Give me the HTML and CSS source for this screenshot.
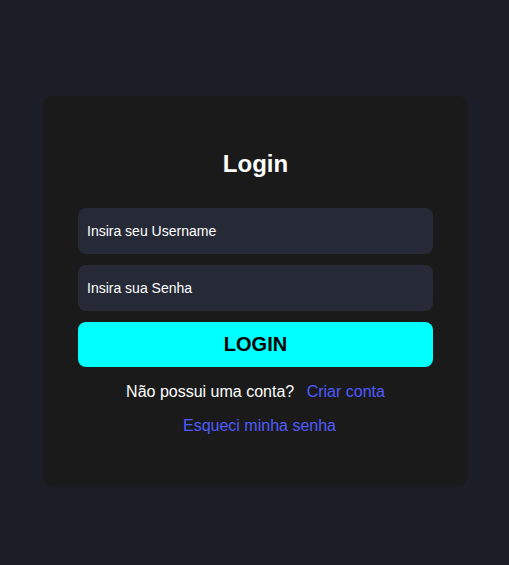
FILE: index.html
```html
<!DOCTYPE html>
<html lang="pt">
<head>
<meta charset="utf-8">
<title>Login</title>
<link rel="stylesheet" href="styles.css">
</head>
<body>
<main class="page">
  <form class="card">
    <h1 class="title">Login</h1>
    <input class="field" type="text" placeholder="Insira seu Username">
    <input class="field" type="password" placeholder="Insira sua Senha">
    <button class="btn" type="button">LOGIN</button>
    <p class="line">Não possui uma conta? <a class="link" href="#">Criar conta</a></p>
    <p class="line line-2"><a class="link" href="#">Esqueci minha senha</a></p>
  </form>
</main>
</body>
</html>
```

FILE: styles.css
```css
html, body {
  margin: 0;
  padding: 0;
  background: #1b1e27;
  font-family: "Liberation Sans", Arial, sans-serif;
}
.page {
  display: flex;
  justify-content: flex-start;
  padding: 96px 0 0 43px;
}
.card {
  box-sizing: border-box;
  width: 425px;
  height: 390px;
  background: #1a1a1a;
  border-radius: 10px;
  padding: 54px 35px 0;
  display: flex;
  flex-direction: column;
}
.title {
  margin: 0 0 30px;
  font-size: 24px;
  line-height: 28px;
  font-weight: bold;
  color: #ffffff;
  text-align: center;
}
.field {
  box-sizing: border-box;
  height: 46px;
  width: 100%;
  border: none;
  border-radius: 8px;
  background: #262a36;
  color: #fff;
  font-family: inherit;
  font-size: 14px;
  padding: 0 9px;
  margin: 0 0 11px;
  outline: none;
}
.field::placeholder {
  color: #ffffff;
  opacity: 1;
}
.btn {
  height: 45px;
  width: 100%;
  border: none;
  border-radius: 8px;
  background: #00ffff;
  color: #000;
  font-family: inherit;
  font-size: 20px;
  font-weight: bold;
  cursor: pointer;
}
.line {
  margin: 16px 0 0;
  font-size: 16px;
  line-height: 18px;
  color: #ffffff;
  text-align: center;
}
.line-2 {
  margin-top: 16px;
}
.link {
  color: #4f5bff;
  text-decoration: none;
  margin-left: 8px;
}
```
